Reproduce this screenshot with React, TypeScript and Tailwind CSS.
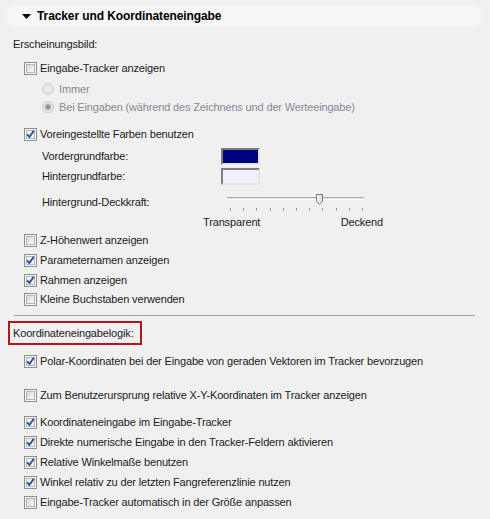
import React from 'react';

const font = { fontFamily: '"Liberation Sans", Arial, sans-serif' };

function CheckBox({ checked }: { checked: boolean }) {
  return (
    <svg width="13" height="13" viewBox="0 0 13 13" className="shrink-0">
      <defs>
        <linearGradient id="cbInner" x1="0" y1="0" x2="1" y2="1">
          <stop offset="0" stopColor="#d6d7d9" />
          <stop offset="1" stopColor="#f9f9f9" />
        </linearGradient>
      </defs>
      <rect x="0.5" y="0.5" width="12" height="12" fill="#f4f4f4" stroke="#8e8f8f" />
      <rect x="2.5" y="2.5" width="8" height="8" fill={checked ? '#f3f3f3' : 'url(#cbInner)'} stroke="#b4b6b9" />
      {checked && (
        <path d="M3.2 6.4 L5.4 9 L9.8 2.8" fill="none" stroke="#2a4aa0" strokeWidth="1.9" strokeLinejoin="round" />
      )}
    </svg>
  );
}

function Radio({ selected }: { selected: boolean }) {
  return (
    <svg width="12" height="12" viewBox="0 0 12 12" className="shrink-0">
      <circle cx="6" cy="6" r="5.5" fill="#f3f3f3" stroke="#c6c7c9" />
      <circle cx="6" cy="6" r="4" fill="#ececec" stroke="#dcdcdc" />
      {selected && (
        <>
          <circle cx="6" cy="6" r="3" fill="#a9aaac" />
          <circle cx="6" cy="6" r="1.6" fill="#8a8b8d" />
        </>
      )}
    </svg>
  );
}

function CheckRow({ label, checked, className = '' }: { label: string; checked: boolean; className?: string }) {
  return (
    <div className={`flex h-[16px] items-center pl-[11px] ${className}`}>
      <CheckBox checked={checked} />
      <span className="ml-[3px] whitespace-nowrap">{label}</span>
    </div>
  );
}

function RadioRow({ label, selected, className = '' }: { label: string; selected: boolean; className?: string }) {
  return (
    <div className={`flex h-[16px] items-center pl-[29px] text-[#858895] ${className}`}>
      <Radio selected={selected} />
      <span className="ml-[5px] whitespace-nowrap">{label}</span>
    </div>
  );
}

export default function App() {
  const ticks = Array.from({ length: 11 });

  return (
    <div
      className="w-[490px] h-[519px] overflow-hidden bg-[#f0f0f0] text-[11px] tracking-[-0.15px] text-[#1b1b1b] flex flex-col"
      style={font}
    >
      {/* Section header */}
      <div className="mt-[5px] ml-[6px] w-[476px] h-[22px] shrink-0 rounded-full bg-[#f6f6f6] flex items-center pl-[16px]">
        <svg width="9" height="5" viewBox="0 0 9 5" className="shrink-0">
          <path d="M0 0 H9 L4.5 5 Z" fill="#000" />
        </svg>
        <span className="ml-[6px] text-[12px] font-bold tracking-[-0.1px] text-black">Tracker und Koordinateneingabe</span>
      </div>

      <div className="flex flex-col pl-[13px]">
        <div className="mt-[9px] h-[16px] flex items-center">Erscheinungsbild:</div>

        <CheckRow label="Eingabe-Tracker anzeigen" checked={false} className="mt-[8px]" />
        <RadioRow label="Immer" selected={false} className="mt-[5px]" />
        <RadioRow label="Bei Eingaben (während des Zeichnens und der Werteeingabe)" selected className="mt-[2px]" />

        <CheckRow label="Voreingestellte Farben benutzen" checked className="mt-[11px]" />

        <div className="mt-[6px] h-[17px] flex items-center pl-[29px]">
          <span className="w-[179px]">Vordergrundfarbe:</span>
          <div className="w-[39px] h-[17px] border-2 border-t-[#7c7c7c] border-l-[#7c7c7c] border-b-[#e4e4e4] border-r-[#e4e4e4] bg-[#000080]" />
        </div>
        <div className="mt-[3px] h-[17px] flex items-center pl-[29px]">
          <span className="w-[179px]">Hintergrundfarbe:</span>
          <div className="w-[39px] h-[17px] border-2 border-t-[#7c7c7c] border-l-[#7c7c7c] border-b-[#e4e4e4] border-r-[#e4e4e4] bg-[#f0f0ff]" />
        </div>

        {/* Opacity slider */}
        <div className="mt-[9px] flex items-start pl-[29px]">
          <span className="w-[161px] h-[16px] flex items-center">Hintergrund-Deckkraft:</span>
          <div className="w-[180px] flex flex-col">
            <div className="relative h-[11px]">
              <div className="absolute left-[24px] top-[3px] w-[137px] h-[3px] border-t border-[#a9a9a9] bg-[#e3e3e3] border-b border-b-[#fbfbfb]" />
              <svg width="7" height="11" viewBox="0 0 7 11" className="absolute left-[113px] top-0">
                <defs>
                  <linearGradient id="thumb" x1="0" y1="0" x2="1" y2="0">
                    <stop offset="0" stopColor="#fbfbfb" />
                    <stop offset="1" stopColor="#d9d9d9" />
                  </linearGradient>
                </defs>
                <path d="M0.5 0.5 H6.5 V7.5 L3.5 10.2 L0.5 7.5 Z" fill="url(#thumb)" stroke="#7a7a7a" />
              </svg>
            </div>
            <div className="mt-[3px] ml-[27px] w-[133px] h-[3px] flex justify-between">
              {ticks.map((_, i) => (
                <div key={i} className="w-px h-[3px] bg-[#9c9c9c]" />
              ))}
            </div>
            <div className="mt-[3px] h-[16px] flex items-center justify-between">
              <span>Transparent</span>
              <span>Deckend</span>
            </div>
          </div>
        </div>

        <CheckRow label="Z-Höhenwert anzeigen" checked={false} className="mt-[2px]" />
        <CheckRow label="Parameternamen anzeigen" checked className="mt-[4px]" />
        <CheckRow label="Rahmen anzeigen" checked className="mt-[4px]" />
        <CheckRow label="Kleine Buchstaben verwenden" checked={false} className="mt-[3px]" />
      </div>

      <div className="mt-[8px] ml-[14px] w-[461px] h-px bg-[#a0a0a0]" />

      <div className="mt-[5px] ml-[8px] w-[134px] h-[24px] border-2 border-[#b8141c] flex items-center pl-[3px]">
        Koordinateneingabelogik:
      </div>

      <div className="flex flex-col pl-[13px]">
        <CheckRow label="Polar-Koordinaten bei der Eingabe von geraden Vektoren im Tracker bevorzugen" checked className="mt-[8px]" />
        <CheckRow label="Zum Benutzerursprung relative X-Y-Koordinaten im Tracker anzeigen" checked={false} className="mt-[18px]" />
        <CheckRow label="Koordinateneingabe im Eingabe-Tracker" checked className="mt-[11px]" />
        <CheckRow label="Direkte numerische Eingabe in den Tracker-Feldern aktivieren" checked className="mt-[4px]" />
        <CheckRow label="Relative Winkelmaße benutzen" checked className="mt-[4px]" />
        <CheckRow label="Winkel relativ zu der letzten Fangreferenzlinie nutzen" checked className="mt-[4px]" />
        <CheckRow label="Eingabe-Tracker automatisch in der Größe anpassen" checked={false} className="mt-[4px]" />
      </div>
    </div>
  );
}
